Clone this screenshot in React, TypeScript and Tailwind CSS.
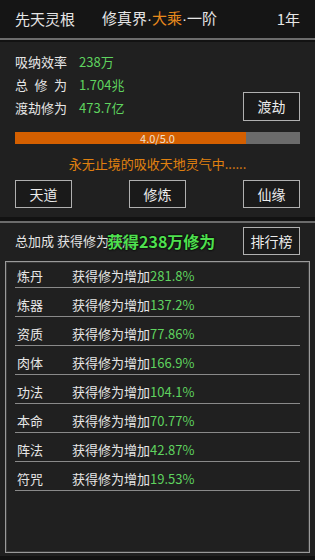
import React from "react";

const rows = [
  { name: "炼丹", value: "281.8%" },
  { name: "炼器", value: "137.2%" },
  { name: "资质", value: "77.86%" },
  { name: "肉体", value: "166.9%" },
  { name: "功法", value: "104.1%" },
  { name: "本命", value: "70.77%" },
  { name: "阵法", value: "42.87%" },
  { name: "符咒", value: "19.53%" },
];

const Btn = ({ label }: { label: string }) => (
  <div className="flex h-[28px] w-[57px] items-center justify-center border border-[#b0b0b0] bg-[#1a1a1a] text-[14px] text-[#ececec]">
    {label}
  </div>
);

const Dot = () => <span className="font-['Liberation_Sans']">·</span>;

const App = () => {
  return (
    <div
      className="h-[560px] w-[315px] overflow-hidden bg-[#121212] text-[#e6e6e6]"
      style={{ fontFamily: '"Noto Sans CJK SC", "Noto Sans", sans-serif' }}
    >
      {/* header */}
      <div className="flex h-[40px] items-center border-b-2 border-[#6c6c6c] bg-[#151515] px-[15px] text-[15px]">
        <span>先天灵根</span>
        <span className="ml-[27px]">
          修真界<Dot />
          <span className="text-[#e8891c]">大乘</span>
          <Dot />一阶
        </span>
        <span className="ml-auto">1年</span>
      </div>

      {/* cultivation panel */}
      <div className="mt-[2px] h-[175px] bg-[#202020] px-[15px] pt-[8px]">
        <div className="flex items-end justify-between">
          <div className="pb-[2px] text-[13px]">
            <div className="flex h-[23px] items-center">
              <span className="w-[64px]">吸纳效率</span>
              <span className="text-[#5fd35f]">238万</span>
            </div>
            <div className="flex h-[23px] items-center">
              <span className="flex w-[52px] justify-between">
                <span>总</span>
                <span>修</span>
                <span>为</span>
              </span>
              <span className="ml-[12px] text-[#5fd35f]">1.704兆</span>
            </div>
            <div className="flex h-[23px] items-center">
              <span className="w-[64px]">渡劫修为</span>
              <span className="text-[#5fd35f]">473.7亿</span>
            </div>
          </div>
          <div className="flex h-[29px] w-[57px] items-center justify-center border border-[#b0b0b0] bg-[#1a1a1a] text-[14px] text-[#ececec]">
            渡劫
          </div>
        </div>

        <div className="relative mt-[11px] h-[12px] w-full bg-[#6b6b6b]">
          <div className="h-full w-[81%] bg-[#d45f00]" />
          <div className="absolute inset-0 flex items-center justify-center text-[11px] leading-none text-[#f0e0d0]">
            4.0/5.0
          </div>
        </div>

        <div className="mt-[11px] text-center text-[13px] leading-[18px] text-[#e0800f]">
          永无止境的吸收天地灵气中......
        </div>

        <div className="mt-[7px] flex justify-between">
          <Btn label="天道" />
          <Btn label="修炼" />
          <Btn label="仙缘" />
        </div>
      </div>

      {/* bonus panel */}
      <div className="mt-[4px] h-[335px] border-t-2 border-[#6c6c6c] bg-[#202020] pt-[4px]">
        <div className="relative flex items-center justify-between px-[15px]">
          <span className="text-[13px]">总加成 获得修为增加</span>
          <span
            className="absolute left-[107px] top-[2px] text-[16px] font-semibold text-[#4fe04f]"
            style={{ textShadow: "0 0 2px #000, 0 0 2px #000" }}
          >
            获得238万修为
          </span>
          <div className="flex h-[28px] w-[57px] items-center justify-center border border-[#b0b0b0] bg-[#1a1a1a] text-[14px] text-[#ececec]">
            排行榜
          </div>
        </div>

        <div className="mx-[5px] mt-[6px] h-[292px] border border-[#9a9a9a]">
          <div className="h-full border border-[#3a3a3a] px-[8px]">
            {rows.map((r) => (
              <div
                key={r.name}
                className="flex h-[29px] items-end border-b border-[#8a8a8a] pb-[2px] pl-[2px] text-[13px] leading-[18px] first:h-[25px]"
              >
                <span className="w-[55px]">{r.name}</span>
                <span>
                  获得修为增加<span className="text-[#5fd35f]">{r.value}</span>
                </span>
              </div>
            ))}
          </div>
        </div>
      </div>
    </div>
  );
};

export default App;
